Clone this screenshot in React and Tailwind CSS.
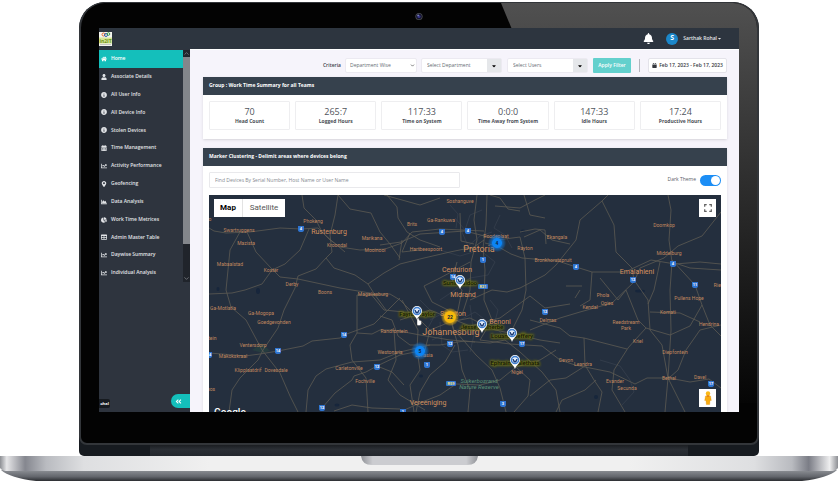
import React from "react";
import {
  FaHome, FaUser, FaInfoCircle, FaCalendarAlt, FaChartLine, FaMapMarkerAlt, FaChartArea,
  FaChartPie, FaTable, FaBell, FaCaretDown, FaAngleDoubleLeft, FaCalendar,
} from "react-icons/fa";
import { LuChevronDown, LuChevronUp } from "react-icons/lu";

const NAV = [
  [FaHome, "Home"],
  [FaUser, "Associate Details"],
  [FaInfoCircle, "All User Info"],
  [FaInfoCircle, "All Device Info"],
  [FaInfoCircle, "Stolen Devices"],
  [FaCalendarAlt, "Time Management"],
  [FaChartLine, "Activity Performance"],
  [FaMapMarkerAlt, "Geofencing"],
  [FaChartArea, "Data Analysis"],
  [FaChartPie, "Work Time Metrices"],
  [FaTable, "Admin Master Table"],
  [FaChartLine, "Daywise Summary"],
  [FaChartLine, "Individual Analysis"],
];

const STATS = [
  ["70", "Head Count"],
  ["265:7", "Logged Hours"],
  ["117:33", "Time on System"],
  ["0:0:0", "Time Away from System"],
  ["147:33", "Idle Hours"],
  ["17:24", "Productive Hours"],
];

const ROADS = [
  "M209 228L214 231L226 233L250 232L280 228L301 229L318 228L330 240L340 247L360 250L385 249L402 243L412 232L440 229L484 231",
  "M302 195L304 208L316 220L322 232L332 241L345 252",
  "M338 195L335 215L330 235L332 252L326 258L316 269L298 276L295 288L284 310L278 328L263 350L258 360L240 378L232 390L229 412",
  "M338 195L350 209L371 213L380 232L390 244L400 258",
  "M309 229L300 250L285 264L272 270L262 284L245 290L232 293L209 294",
  "M240 232L230 250L228 270L226 290L231 307L246 320L262 350",
  "M247 232L256 252L271 268L280 277L298 279L340 288L370 293L384 310L404 312",
  "M326 258L334 268L355 275L368 284L375 295L386 310",
  "M368 284L384 273L400 264L424 258L450 252L474 247L484 240",
  "M357 295L357 333L350 345L352 360L366 378L368 412",
  "M357 295L390 294L400 300L412 312L430 330",
  "M209 353L222 354L245 356L260 354L278 351L303 346L312 341L340 338L344 335L374 324L389 309L400 298",
  "M262 350L280 373L290 396L298 412",
  "M306 412L308 390L316 376L326 369L352 362L380 360L400 352L430 345",
  "M322 408L335 393L352 380L354 376L366 372L377 366L400 355L425 350",
  "M334 411L352 405L372 408L400 409",
  "M357 333L372 334L380 330L394 330L420 335L450 340L475 342",
  "M487 195L486 225L483 248L485 270L484 300L492 320L480 340",
  "M477 195L474 220L477 240L471 262L470 290L462 315",
  "M460 213L461 241L474 244M463 247L474 249",
  "M380 245L401 242L420 234L465 231L500 240",
  "M387 195L397 207L398 218L407 232L420 240L440 247",
  "M399 260L402 240M410 233L402 252L420 250",
  "M490 195L500 198L508 209L520 211M495 206L520 208L535 200L545 195",
  "M485 243L497 246L511 254L522 258L558 261L576 267L592 272L625 272L651 260L675 264L700 262L721 264",
  "M524 237L540 230L552 240L570 244M520 232L535 229L545 230L546 244",
  "M497 240L520 237L525 258L526 290L522 310L512 330",
  "M470 300L492 290L507 292L520 288L545 275L556 265L576 240L580 220L602 201L608 195",
  "M602 201L614 225L616 252L632 268L634 280",
  "M668 195L671 210L669 240L672 262L670 290L671 330L668 378L665 412",
  "M721 212L702 236L678 246L664 258L640 268L634 282L612 303L580 312L560 318L530 330",
  "M566 286L582 286M592 272L590 300L580 306M575 298L580 290",
  "M634 280L648 300L650 330L662 345L668 378L685 412",
  "M672 260L695 285L702 305L710 325L721 336",
  "M672 262L690 268L721 270M660 262L654 290L648 304",
  "M721 325L700 330L686 350L678 370L669 378",
  "M600 278L618 300L626 290L638 320L646 328L635 340L628 348L614 370L612 390L625 412",
  "M530 320L560 328L570 336L584 338L627 349",
  "M584 338L585 365L594 380L602 392L598 412",
  "M480 340L510 344L542 346L560 360L575 365L610 372L635 384L647 378L669 378L690 382L709 379L721 388",
  "M464 341L490 343L505 340L520 352L542 372L556 390L560 412",
  "M464 341L476 355L492 370L500 388L506 412",
  "M464 341L454 330L448 310L432 302L424 286L440 278L455 270L470 262",
  "M455 345L445 362L430 375L420 392L416 412",
  "M425 350L430 330L450 322L470 318L482 324L495 330L515 334L540 340L560 343",
  "M417 350L418 330L410 315L402 300M417 350L420 370L410 385L414 412",
  "M400 320L430 310L450 318L470 326L500 318L530 296L545 308L570 304",
  "M516 367L500 380L480 385L456 384L440 395L422 402L400 412",
  "M516 367L530 380L528 396L514 412M516 367L540 360L556 350",
  "M394 330L396 360L388 380L400 395L425 410M377 366L392 372L404 385",
  "M457 262L452 280L462 290L458 310L452 325L458 345L462 370L470 390L468 412",
  "M380 316L392 320L398 336L410 345L440 345L464 341",
  "M384 195L420 205L440 198M524 195L530 215L545 218",
  "M530 396L550 380L566 378L585 366M556 412L562 400L585 390L596 380",
  "M646 328L670 335L690 326L702 305M650 312L680 313L700 322",
];

const MINOR = [
  "M440 250L460 256L480 250L495 262L488 275L470 278L455 290L440 300",
  "M430 320L445 312L460 320L475 312L488 322L478 332L462 328L446 334L432 340",
  "M440 322L442 345L452 352L468 350M470 305L474 335L470 352",
  "M455 218L465 230L470 215L482 210M462 232L468 246L480 236L492 232",
  "M420 300L435 315L428 328M490 300L498 310L494 325L505 338",
  "M600 360L620 366L630 380L634 392L622 405",
  "M450 205L458 214L456 228M500 215L494 228L505 235L512 248",
];

const TOWNS = [
  ["Swartruggens", 239, 232], ["Mazista", 246, 245], ["Mabaalstad", 230, 266], ["Phokeng", 313, 223],
  ["Kroondal", 337, 247], ["Marikana", 372, 240], ["Mooinooi", 375, 252], ["Koster", 271, 272],
  ["Derby", 292, 286], ["Boons", 325, 294], ["Magaliesburg", 373, 296], ["Ga-Motlatla", 223, 310],
  ["Ga-Mogopa", 261, 315], ["Goedgevonden", 274, 324], ["Ventersdorp", 253, 347],
  ["Makokskraal", 233, 358], ["Klipplaatdrif", 248, 372], ["Dovesdale", 276, 372],
  ["Carletonville", 349, 370], ["Fochville", 365, 383], ["Randfontein", 394, 333],
  ["Westonaria", 390, 354], ["Soshanguve", 460, 203], ["Ga-Rankuwa", 441, 222], ["Brits", 412, 226],
  ["Hartbeespoort", 426, 251], ["Roodeplaat", 496, 238], ["Rayton", 525, 250], ["Ekangala", 557, 239],
  ["Bronkhorstspruit", 553, 262], ["Delmas", 548, 322], ["Devon", 566, 362], ["Leandra", 583, 366],
  ["Nigel", 517, 374], ["Doornkop", 664, 227], ["Middelburg", 669, 255], ["Rietkuil", 722, 287],
  ["Pullens Hope", 689, 300], ["Phola", 603, 297], ["Ogies", 607, 305], ["Kendal", 590, 309],
  ["Komati", 668, 314], ["Hendrina", 709, 326], ["Reedstream", 626, 324], ["Park", 626, 330],
  ["Kriel", 638, 343], ["Diepfontein", 675, 354], ["Bethal", 669, 380], ["Davel", 700, 379],
  ["Evander", 615, 383], ["Secunda", 627, 390], ["Lenasia", 424, 357],
];

const CITIES = [
  ["Rustenburg", 329, 234], ["Centurion", 457, 272], ["Midrand", 463, 297], ["Sandton", 453, 316],
  ["Benoni", 500, 324], ["Vereeniging", 428, 405], ["Emalahleni", 637, 274],
];

const SHIELDS = [
  ["4", 301, 229], ["14", 278, 351], ["14", 344, 335], ["12", 377, 367], ["12", 322, 408], ["4", 442, 232],
  ["4", 468, 231], ["1", 483, 260], ["14", 453, 277], ["4", 576, 267], ["12", 545, 312], ["17", 522, 344],
  ["12", 450, 344], ["1", 427, 365], ["3", 503, 404], ["4", 673, 264], ["12", 633, 280], ["11", 695, 285],
  ["17", 711, 384], ["14", 209, 355], ["1", 403, 412],
];

const PINS = [
  ["Sunil Naidoo", 460, 285], ["Fayroz Taylor", 417, 316], ["Jesse Malherbe", 482, 329],
  ["Louandi Jeffery", 512, 338], ["Ephraim Balethata", 515, 365],
];

function MapCanvas() {
  return (
    <svg
      viewBox="209 195 512 217"
      preserveAspectRatio="xMidYMin slice"
      className="block h-full w-full bg-[#242f3e] font-[family-name:Roboto,sans-serif]"
      role="img"
      aria-label="Map of devices around Johannesburg"
    >
      <defs>
        <radialGradient id="blueGlow">
          <stop offset="0.5" stopColor="#0b84f5" />
          <stop offset="0.6" stopColor="#0b84f5" stopOpacity="0.6" />
          <stop offset="1" stopColor="#0b84f5" stopOpacity="0.05" />
        </radialGradient>
        <radialGradient id="goldGlow">
          <stop offset="0.6" stopColor="#f7b90b" />
          <stop offset="0.7" stopColor="#d9a514" stopOpacity="0.7" />
          <stop offset="1" stopColor="#f7b90b" stopOpacity="0.05" />
        </radialGradient>
        <filter id="labelGlow" x="-20%" y="-80%" width="140%" height="260%">
          <feGaussianBlur stdDeviation="1.3" />
        </filter>
      </defs>
      <path d="M252 350L262 343L270 351L262 353Z" fill="#263c3f" />
      <g fill="#17263c">
        <ellipse cx="258" cy="291" rx="2" ry="3" />
        <ellipse cx="218" cy="289" rx="1.5" ry="2" />
        <ellipse cx="523" cy="231" rx="2.5" ry="1.5" />
        <ellipse cx="596" cy="397" rx="2" ry="2" />
        <ellipse cx="337" cy="405" rx="2.5" ry="1.5" />
        <ellipse cx="421" cy="376" rx="2" ry="1.5" />
        <ellipse cx="640" cy="291" rx="5" ry="1.5" />
      </g>
      <g fill="none" stroke="#3c4553" strokeWidth="0.6">
        {MINOR.map((d) => <path key={d} d={d} />)}
      </g>
      <g fill="none" stroke="#5d5a53" strokeWidth="0.8" strokeLinejoin="round">
        {ROADS.map((d) => <path key={d} d={d} />)}
      </g>
      <g textAnchor="middle" fill="#c0885f" fontSize="5">
        {TOWNS.map(([name, x, y]) => <text key={name} x={x} y={y}>{name}</text>)}
        <text x="210" y="221">o</text>
        <text x="211" y="340">stein</text>
        <text x="211" y="391">bos</text>
      </g>
      <g textAnchor="middle" fill="#d5915f" fontSize="7">
        {CITIES.map(([name, x, y]) => <text key={name} x={x} y={y}>{name}</text>)}
      </g>
      <g textAnchor="middle" fill="#d5915f" fontSize="9">
        <text x="479" y="252">Pretoria</text>
        <text x="451" y="335">Johannesburg</text>
      </g>
      <g textAnchor="middle" fill="#5a8f76" fontSize="6" fontStyle="italic">
        <text x="479" y="383">Suikerbosrand</text>
        <text x="479" y="389">Nature Reserve</text>
      </g>
      {SHIELDS.map(([n, x, y]) => (
        <g key={n + "-" + x}>
          <path d={`M${x - 3} ${y - 3}H${x + 3}V${y + 1}Q${x + 3} ${y + 3} ${x} ${y + 3}Q${x - 3} ${y + 3} ${x - 3} ${y + 1}Z`} fill="#2f74d0" />
          <text x={x} y={y + 1} textAnchor="middle" fontSize="4" fontWeight="700" fill="#fff">{n}</text>
        </g>
      ))}
      {[["R21", 483, 287], ["R59", 451, 384]].map(([n, x, y]) => (
        <g key={n}>
          <rect x={x - 5} y={y - 3} width="10" height="5" rx="1" fill="#2f74d0" />
          <text x={x} y={y + 1} textAnchor="middle" fontSize="4" fontWeight="700" fill="#f6e27a">{n}</text>
        </g>
      ))}
      <circle cx="497" cy="243" r="9" fill="url(#blueGlow)" />
      <circle cx="420" cy="351" r="9" fill="url(#blueGlow)" />
      <circle cx="450" cy="317" r="9" fill="url(#goldGlow)" />
      <g textAnchor="middle" fontSize="5" fontWeight="700" fill="#10243a">
        <text x="497" y="245">4</text>
        <text x="420" y="353">5</text>
        <text x="450" y="319">22</text>
      </g>
      {PINS.map(([name, x, y]) => (
        <g key={name}>
          <text x={x} y={y} textAnchor="middle" fontSize="6" fill="#6f7010" fillOpacity="0.8" stroke="#6f7010" strokeOpacity="0.8" strokeWidth="2" filter="url(#labelGlow)" aria-hidden="true">{name}</text>
          <text x={x} y={y} textAnchor="middle" fontSize="6" fontWeight="500" fill="#10160c">{name}</text>
          <path d={`M${x} ${y + 4}C${x - 1} ${y} ${x - 5} ${y - 1} ${x - 5} ${y - 5}A5 5 0 0 1 ${x + 5} ${y - 5}C${x + 5} ${y - 1} ${x + 1} ${y} ${x} ${y + 4}Z`} fill="#fff" />
          <circle cx={x} cy={y - 5} r="4.300" fill="#3f7fd0" />
          <circle cx={x} cy={y - 5} r="2.800" fill="#dfeaf8" />
          <path d={`M${x - 2} ${y - 6}L${x} ${y - 3}L${x + 2} ${y - 6}L${x + 1} ${y - 3}H${x - 1}Z`} fill="#12336e" stroke="#12336e" strokeWidth="0.8" />
        </g>
      ))}
      <path d="M417 325V318.500Q418 317.500 419 318.500V320L421.500 321V324L420 325.500H418Z" fill="#fff" stroke="#333" strokeWidth="0.4" />
      <text x="214" y="416" fontSize="10" fontWeight="500" fill="#fff">Google</text>
    </svg>
  );
}

function Pegman() {
  return (
    <svg viewBox="0 0 8 14" className="h-[14px] w-[8px]" aria-hidden="true">
      <circle cx="4" cy="2.400" r="2.200" fill="#fbb917" />
      <path d="M1.500 5Q4 4 6.500 5L7.300 9.500H6L5.700 13.500H2.300L2 9.500H0.700Z" fill="#f9ab10" stroke="#d48806" strokeWidth="0.300" />
      <path d="M2.500 4.600H5.500L4 6Z" fill="#d9650b" />
    </svg>
  );
}

function ComboBox({ label }) {
  return (
    <div className="relative flex h-[15px] w-[81px] rounded-[2px] border border-[#eceaf1] bg-white">
      <select aria-label={label} className="h-full w-full appearance-none bg-transparent pl-[5px] text-[5px] leading-[13px] text-[#666b73]">
        <option>{label}</option>
      </select>
      <span className="pointer-events-none absolute inset-y-0 right-0 flex w-[14px] items-center justify-center bg-[#e5e7ea]">
        <FaCaretDown className="size-[6px] text-black" />
      </span>
    </div>
  );
}

function CardHeader({ children }) {
  return (
    <h2 className="flex h-[18px] items-center bg-[#36414d] px-[6px] text-[5px] font-bold text-white">{children}</h2>
  );
}

function Logo() {
  return (
    <svg viewBox="0 0 13 14" className="h-[14px] w-[13px]" role="img" aria-label="in2IT">
      <rect width="13" height="14" fill="#f3f4ee" />
      <circle cx="4.500" cy="2.500" r="1.500" fill="none" stroke="#e2632b" />
      <circle cx="7" cy="3" r="1.500" fill="none" stroke="#2a5fae" />
      <circle cx="9.500" cy="2" r="1.300" fill="none" stroke="#3b9b49" />
      <rect y="5.500" width="13" height="6" fill="#d6e596" />
      <text x="6.500" y="11" textAnchor="middle" fontSize="5" fontWeight="700" fill="#6f961a">in2IT</text>
      <rect x="1" y="12.500" width="11" height="0.500" fill="#999" />
    </svg>
  );
}

function Dashboard() {
  return (
    <div className="flex h-[384px] flex-col overflow-hidden bg-[#2e343e] font-[family-name:Open_Sans,sans-serif]">
      <header className="flex h-[21px] shrink-0 items-center justify-between bg-[#2d353f] pr-[17px]">
        <Logo />
        <div className="flex items-center">
          <button aria-label="Notifications" className="mr-[12px]"><FaBell className="size-[11px] text-white" /></button>
          <button className="flex items-center text-[5px] font-semibold text-[#e3e5e8]">
            <span className="mr-[5px] flex size-[12px] items-center justify-center rounded-full bg-[#1b87c9] text-[7px] font-bold text-white">S</span>
            Sarthak Rohal
            <FaCaretDown className="size-[5px]" />
          </button>
        </div>
      </header>
      <div className="flex min-h-0 grow">
        <aside className="flex w-[91px] shrink-0 flex-col justify-between pt-px">
          <div className="flex h-[232px]">
            <nav className="grid grow grid-rows-13">
              {NAV.map(([Icon, name], i) => (
                <a
                  key={name}
                  href="#"
                  className={
                    i === 0
                      ? "flex items-center gap-[4px] bg-[#14bfbb] pl-[2px] text-[5px] font-semibold whitespace-nowrap text-white"
                      : "flex items-center gap-[4px] pl-[2px] text-[5px] font-semibold whitespace-nowrap text-[#e1e3e6]"
                  }
                >
                  <Icon className="size-[6px]" />
                  {name}
                </a>
              ))}
            </nav>
            <div className="flex w-[7px] flex-col items-center justify-between bg-[#20242b] text-[#9da1a6]">
              <LuChevronUp className="size-[7px]" />
              <div className="mb-[31px] w-full grow bg-[#83868b]" />
              <LuChevronDown className="size-[7px]" />
            </div>
          </div>
          <div className="flex items-end justify-between pb-[4px]">
            <span className="flex h-[9px] w-[11px] items-center justify-center rounded-r-[2px] bg-[#171b20] text-[4px] font-bold text-white">ohal</span>
            <button aria-label="Collapse menu" className="flex h-[14px] w-[19px] items-center rounded-l-full bg-[#14bfbb] pl-[4px] text-white">
              <FaAngleDoubleLeft className="size-[7px]" />
            </button>
          </div>
        </aside>
        <main className="flex min-w-0 grow flex-col border-t border-white bg-[#f6f4fb] pr-[12px] pl-[13px]">
          <div className="mt-[8px] flex h-[15px] shrink-0 items-center justify-end">
            <label htmlFor="criteria" className="mr-[4px] text-[5px] font-semibold text-[#3e434a]">Criteria</label>
            <div className="relative mr-[4px] h-[15px] w-[72px]">
              <select id="criteria" className="block h-full w-full appearance-none rounded-[2px] border border-[#eceaf1] bg-white pl-[4px] text-[5px] leading-[13px] text-[#666b73]">
                <option>Department Wise</option>
              </select>
              <LuChevronDown className="pointer-events-none absolute top-[5px] right-[2px] size-[5px] stroke-3 text-[#333]" />
            </div>
            <div className="flex gap-[5px]">
              <ComboBox label="Select Department" />
              <ComboBox label="Select Users" />
              <button className="h-[15px] w-[38px] rounded-[1px] bg-[#63d0cd] text-[5px] font-semibold text-white">Apply Filter</button>
            </div>
            <div className="mx-[8px] h-[13px] w-px bg-[#b5b5bd]" />
            <button className="flex h-[15px] w-[79px] items-center justify-center gap-[2px] rounded-[2px] border border-[#e4e3ea] bg-white text-[5px] font-semibold whitespace-nowrap text-[#33373d]">
              <FaCalendar className="size-[5px]" />
              Feb 17, 2023 - Feb 17, 2023
            </button>
          </div>
          <section className="mt-[4px] shrink-0 bg-white shadow-sm">
            <CardHeader>Group : Work Time Summary for all Teams</CardHeader>
            <div className="grid grid-cols-6 gap-[5px] px-[6px] pt-[6px] pb-[9px]">
              {STATS.map(([value, name]) => (
                <div key={name} className="flex h-[29px] flex-col items-center justify-center rounded-[1px] border border-[#eeeef0]">
                  <span className="text-[9px] leading-[11px] text-[#50555c]">{value}</span>
                  <span className="text-[5px] leading-[9px] font-bold whitespace-nowrap text-[#4b4f56]">{name}</span>
                </div>
              ))}
            </div>
          </section>
          <section className="mt-[9px] flex min-h-0 grow flex-col bg-white shadow-sm">
            <CardHeader>Marker Clustering - Delimit areas where devices belong</CardHeader>
            <div className="flex min-h-0 grow flex-col px-[6px] pt-[6px]">
              <div className="mb-[7px] flex items-center justify-between">
                <input
                  type="text"
                  aria-label="Find devices"
                  placeholder="Find Devices By Serial Number, Host Name or User Name"
                  className="h-[16px] w-[49%] rounded-[1px] border border-[#e9e9ec] px-[5px] text-[5px] placeholder:text-[#858a91]"
                />
                <label className="flex items-center gap-[4px] text-[5px] text-[#5c6168]">
                  Dark Theme
                  <input
                    type="checkbox"
                    defaultChecked
                    className="flex h-[11px] w-[21px] appearance-none items-center rounded-full bg-[#1c8ef5] p-px before:size-[9px] before:rounded-full before:bg-white checked:justify-end"
                  />
                </label>
              </div>
              <div className="relative min-h-0 grow overflow-hidden">
                <MapCanvas />
                <div className="absolute top-[4px] left-[5px] flex h-[18px] divide-x divide-[#e3e3e3] bg-white font-[family-name:Roboto,sans-serif] text-[8px]">
                  <button className="w-[29px] font-bold text-black">Map</button>
                  <button className="w-[42px] text-[#565656]">Satellite</button>
                </div>
                <button aria-label="Full screen" className="absolute top-[4px] right-[5px] flex h-[18px] w-[17px] items-center justify-center bg-white">
                  <svg viewBox="0 0 8 8" className="size-[8px]" fill="none" stroke="#5f5f5f" strokeWidth="1.200">
                    <path d="M0.700 2.700V0.700H2.700M5.300 0.700H7.300V2.700M7.300 5.300V7.300H5.300M2.700 7.300H0.700V5.300" />
                  </svg>
                </button>
                <button aria-label="Street view" className="absolute right-[5px] bottom-[5px] flex h-[18px] w-[17px] items-center justify-center bg-white"><Pegman /></button>
              </div>
            </div>
          </section>
        </main>
      </div>
    </div>
  );
}

export default function App() {
  return (
    <div className="min-h-screen overflow-hidden bg-white pt-[2px]">
      <div className="relative mx-[79px] overflow-hidden rounded-t-[26px] rounded-b-[5px] bg-[#171b20]">
        <div className="relative overflow-hidden rounded-t-[26px] rounded-b-[8px] border-2 border-t border-[#33363a] bg-[#030303] px-[18px] pt-[25px] pb-[31px]">
          <svg viewBox="0 0 260 400" preserveAspectRatio="none" className="absolute top-0 right-0 h-[400px] w-[260px]" aria-hidden="true">
            <defs>
              <linearGradient id="gloss" x1="0" y1="0" x2="0" y2="1">
                <stop offset="0" stopColor="#505050" />
                <stop offset="0.5" stopColor="#2a2a2a" />
                <stop offset="1" stopColor="#050505" />
              </linearGradient>
            </defs>
            <path d="M4 0H260V400H170Z" fill="url(#gloss)" />
          </svg>
          <svg viewBox="0 0 10 10" className="absolute top-[9px] left-1/2 size-[9px] -translate-x-1/2" aria-hidden="true">
            <circle cx="5" cy="5" r="4" fill="#4a4c55" />
            <circle cx="5" cy="5" r="3.100" fill="#15152a" />
            <circle cx="5" cy="5" r="1.800" fill="#34348a" />
            <circle cx="4" cy="3.800" r="0.900" fill="#8f96c8" />
          </svg>
          <div className="relative"><Dashboard /></div>
        </div>
        <div className="mx-[71px] h-[11px] bg-[linear-gradient(#1b1e22,#2b2f35_40%,#23272d)]" />
      </div>
      <div className="relative h-[25px]">
        <svg viewBox="0 0 838 25" preserveAspectRatio="none" className="block h-full w-full" aria-hidden="true">
          <defs>
            <linearGradient id="silver">
              <stop offset="0" stopColor="#8d8f94" />
              <stop offset="0.008" stopColor="#e6e6e8" />
              <stop offset="0.03" stopColor="#85878f" />
              <stop offset="0.055" stopColor="#b9bbc0" />
              <stop offset="0.1" stopColor="#dedfe1" />
              <stop offset="0.25" stopColor="#f0f0f0" />
              <stop offset="0.75" stopColor="#f0f0f0" />
              <stop offset="0.9" stopColor="#dedfe1" />
              <stop offset="0.945" stopColor="#b9bbc0" />
              <stop offset="0.965" stopColor="#7b7d86" />
              <stop offset="0.99" stopColor="#eeeeef" />
              <stop offset="1" stopColor="#8d8f94" />
            </linearGradient>
            <linearGradient id="under" x1="0" y1="0" x2="0" y2="1">
              <stop offset="0" stopColor="#8e9196" />
              <stop offset="0.6" stopColor="#63666c" />
              <stop offset="1" stopColor="#2b2d31" />
            </linearGradient>
            <linearGradient id="notch">
              <stop offset="0" stopColor="#8f9196" />
              <stop offset="0.1" stopColor="#cbccd0" />
              <stop offset="0.9" stopColor="#cbccd0" />
              <stop offset="1" stopColor="#8f9196" />
            </linearGradient>
          </defs>
          <path d="M1 14Q10 22 36 25H802Q828 22 837 14Z" fill="url(#under)" />
          <path d="M0 0H838V12Q837 14 833 15H5Q1 14 0 12Z" fill="url(#silver)" />
          <path d="M361 0H478Q477 9 467 9H372Q362 9 361 0Z" fill="url(#notch)" />
        </svg>
      </div>
    </div>
  );
}
